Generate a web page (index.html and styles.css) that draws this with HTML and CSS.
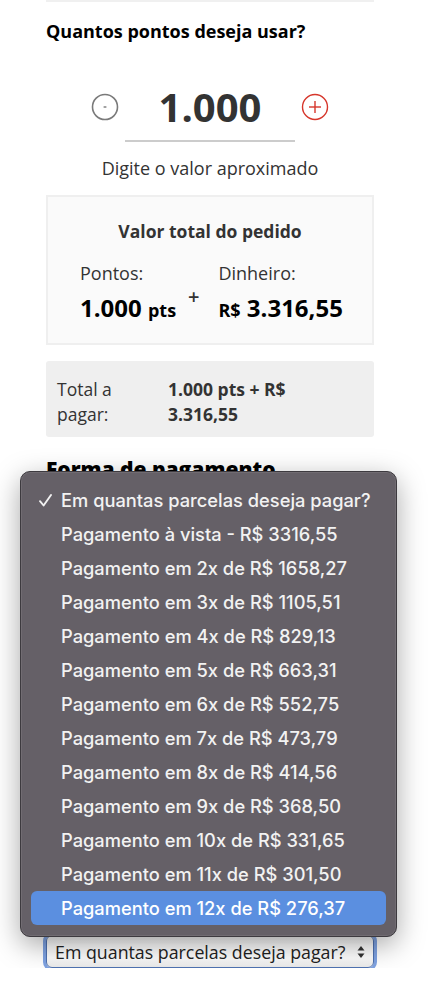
FILE: index.html
```html
<!DOCTYPE html>
<html lang="pt-BR">
<head>
    <meta charset="UTF-8">
    <meta name="viewport" content="width=device-width, initial-scale=1.0">
    <title>Pontos + Dinheiro</title>
    <link rel="stylesheet" href="styles.css">
</head>
<body>
    <div class="page">
        <h2 class="sectionTitle">Quantos pontos deseja usar?</h2>

        <div class="stepper">
            <button class="stepBtn" aria-label="menos">
                <svg width="28" height="28" viewBox="0 0 28 28">
                    <circle cx="14" cy="14" r="12.5" fill="none" stroke="#7a7a7a" stroke-width="1.6"/>
                    <line x1="12.6" y1="14" x2="15.4" y2="14" stroke="#7a7a7a" stroke-width="1.4"/>
                </svg>
            </button>
            <span class="stepValue">1.000</span>
            <button class="stepBtn" aria-label="mais">
                <svg width="28" height="28" viewBox="0 0 28 28">
                    <circle cx="14" cy="14" r="12.5" fill="none" stroke="#d6362b" stroke-width="1.4"/>
                    <line x1="8" y1="14" x2="20" y2="14" stroke="#d6362b" stroke-width="1.4"/>
                    <line x1="14" y1="8" x2="14" y2="20" stroke="#d6362b" stroke-width="1.4"/>
                </svg>
            </button>
        </div>
        <div class="stepLine"></div>
        <p class="stepHint">Digite o valor aproximado</p>

        <div class="summaryBox">
            <h3 class="summaryTitle">Valor total do pedido</h3>
            <div class="summaryCols">
                <div class="summaryCol colPoints">
                    <span class="summaryLabel">Pontos:</span>
                    <span class="summaryValue">1.000 <small>pts</small></span>
                </div>
                <span class="summaryPlus">+</span>
                <div class="summaryCol">
                    <span class="summaryLabel">Dinheiro:</span>
                    <span class="summaryValue"><small>R$</small> 3.316,55</span>
                </div>
            </div>
        </div>

        <div class="totalBox">
            <span class="totalLabel">Total a pagar:</span>
            <span class="totalValue">1.000 pts + R$ 3.316,55</span>
        </div>

        <h2 class="payTitle">Forma de pagamento</h2>

        <div class="selectWrap">
            <select class="paySelect">
                <option>Em quantas parcelas deseja pagar?</option>
            </select>
            <svg class="selectArrows" width="8" height="14" viewBox="0 0 8 14">
                <path d="M0.5 5.5 L4 1 L7.5 5.5 Z" fill="#333"/>
                <path d="M0.5 8.5 L4 13 L7.5 8.5 Z" fill="#333"/>
            </svg>
        </div>
    </div>

    <ul class="popupMenu">
        <li class="checked">
            <svg class="check" width="13" height="13" viewBox="0 0 13 13">
                <path d="M1 7.2 L4.6 11.5 L12 1" fill="none" stroke="#f2f2f2" stroke-width="1.9" stroke-linecap="round" stroke-linejoin="round"/>
            </svg>Em quantas parcelas deseja pagar?</li>
        <li>Pagamento à vista - R$ 3316,55</li>
        <li>Pagamento em 2x de R$ 1658,27</li>
        <li>Pagamento em 3x de R$ 1105,51</li>
        <li>Pagamento em 4x de R$ 829,13</li>
        <li>Pagamento em 5x de R$ 663,31</li>
        <li>Pagamento em 6x de R$ 552,75</li>
        <li>Pagamento em 7x de R$ 473,79</li>
        <li>Pagamento em 8x de R$ 414,56</li>
        <li>Pagamento em 9x de R$ 368,50</li>
        <li>Pagamento em 10x de R$ 331,65</li>
        <li>Pagamento em 11x de R$ 301,50</li>
        <li class="hover">Pagamento em 12x de R$ 276,37</li>
    </ul>
</body>
</html>
```

FILE: styles.css
```css
body{
    margin: 0;
    background-color: #fff;
    font-family: "Open Sans", "Liberation Sans", sans-serif;
    color: #333;
    position: relative;
}
.page{
    margin: 0 68px 0 46px;
    border-top: 2px solid #f0f0f0;
}
.sectionTitle{
    margin: 18px 0 0;
    font-size: 18px;
    line-height: 22px;
    font-weight: 700;
    color: #000;
}
.stepper{
    display: flex;
    justify-content: center;
    align-items: center;
    gap: 40px;
    margin-top: 41px;
}
.stepBtn{
    border: none;
    background: none;
    padding: 0;
    width: 28px;
    height: 28px;
    display: flex;
}
.stepValue{
    font-size: 40px;
    line-height: 48px;
    font-weight: 700;
    color: #333;
}
.stepLine{
    width: 170px;
    height: 2px;
    background-color: #ccc;
    margin: 9px auto 0;
}
.stepHint{
    margin: 15px 0 0;
    text-align: center;
    font-size: 18px;
    line-height: 22px;
}
.summaryBox{
    margin-top: 16px;
    background-color: #fafafa;
    border: 2px solid #efefef;
    padding: 24px 0 17px 32px;
}
.summaryTitle{
    margin: 0 32px 0 0;
    text-align: center;
    font-size: 17.5px;
    line-height: 20px;
    font-weight: 700;
}
.summaryCols{
    display: flex;
    margin-top: 21px;
}
.summaryCol{
    display: flex;
    flex-direction: column;
    gap: 8px;
}
.colPoints{
    width: 108px;
}
.summaryLabel{
    font-size: 18px;
    line-height: 22px;
}
.summaryValue{
    font-size: 24px;
    line-height: 32px;
    font-weight: 700;
    color: #000;
}
.summaryValue small{
    font-size: 18px;
}
.summaryPlus{
    margin: 24px 19px 0 0;
    font-size: 20px;
    line-height: 22px;
    font-weight: 600;
    color: #333;
}
.totalBox{
    margin-top: 16px;
    background-color: #efefef;
    border-radius: 3px;
    padding: 16px 11px 10px;
    display: flex;
    font-size: 17.5px;
    line-height: 25px;
}
.totalLabel{
    width: 90px;
    margin-right: 21px;
}
.totalValue{
    width: 160px;
    font-size: 17.5px;
    font-weight: 700;
}
.payTitle{
    margin: 18px 0 0;
    font-size: 21px;
    line-height: 28px;
    font-weight: 800;
    color: #000;
}
.selectWrap{
    position: relative;
    margin-top: 452px;
    height: 33px;
}
.paySelect{
    appearance: none;
    -webkit-appearance: none;
    width: 100%;
    height: 33px;
    box-sizing: border-box;
    border: 1.5px solid #4f72b1;
    border-radius: 6px;
    box-shadow: 0 0 0 3px #7ea2e2;
    background: linear-gradient(#f4f4f4, #fff 30%, #fff 70%, #e9e9e9);
    font-family: "Open Sans", "Liberation Sans", sans-serif;
    font-size: 17.8px;
    color: #222;
    padding: 0 24px 0 8px;
}
.selectArrows{
    position: absolute;
    right: 9px;
    top: 10px;
}
.popupMenu{
    position: absolute;
    left: 20px;
    top: 471px;
    width: 377px;
    box-sizing: border-box;
    margin: 0;
    padding: 11px 10px;
    list-style: none;
    background-color: #656067;
    border: 1px solid #3d3a3f;
    border-radius: 10px;
    box-shadow: 0 8px 28px rgba(0, 0, 0, 0.35), inset 0 0 0 1px rgba(255, 255, 255, 0.08);
    font-family: Inter, "Noto Sans", sans-serif;
    font-size: 18.3px;
    font-weight: 500;
    color: #f2f2f2;
}
.popupMenu li{
    position: relative;
    height: 34px;
    line-height: 34px;
    padding-left: 30px;
    border-radius: 6px;
    white-space: nowrap;
}
.popupMenu .check{
    position: absolute;
    left: 8px;
    top: 11px;
}
.popupMenu .hover{
    background-color: #5b8fe0;
    color: #fff;
}
```
